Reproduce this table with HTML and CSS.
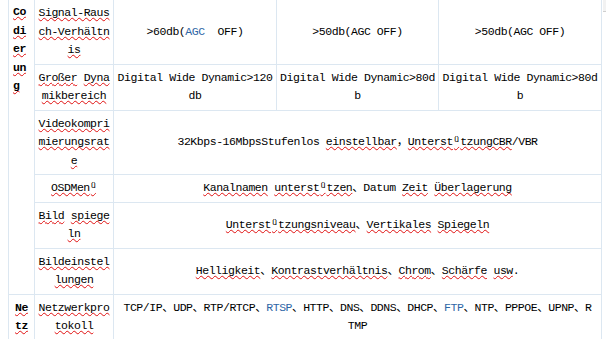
FILE: index.html
```html
<!DOCTYPE html>
<html lang="de">
<head>
<meta charset="utf-8">
<title>Spezifikation</title>
<link rel="stylesheet" href="styles.css">
</head>
<body>
<div class="scrollmark"></div>
<table class="spec">
  <colgroup>
    <col class="c1"><col class="c2"><col class="c3"><col class="c4"><col class="c5">
  </colgroup>
  <tr>
    <td class="group left" rowspan="6"><span class="sp">Codierung</span></td>
    <td class="name"><span class="sp">Signal-Rausch-Verhältnis</span></td>
    <td>&gt;60db(<span class="lnk">AGC</span>&nbsp; OFF)</td>
    <td>&gt;50db(AGC OFF)</td>
    <td>&gt;50db(AGC OFF)</td>
  </tr>
  <tr>
    <td class="name"><span class="sp">Großer</span> <span class="sp">Dynamikbereich</span></td>
    <td>Digital Wide Dynamic&gt;120db</td>
    <td>Digital Wide Dynamic&gt;80db</td>
    <td>Digital Wide Dynamic&gt;80db</td>
  </tr>
  <tr>
    <td class="name"><span class="sp">Videokomprimierungsrate</span></td>
    <td colspan="3">32Kbps-16MbpsStufenlos <span class="sp">einstellbar</span>，<span class="sp">Unterst<span class="uu">ü</span>tzungCBR</span>/VBR</td>
  </tr>
  <tr>
    <td class="name"><span class="sp">OSDMen<span class="uu">ü</span></span></td>
    <td colspan="3"><span class="sp">Kanalnamen</span> <span class="sp">unterst<span class="uu">ü</span>tzen</span>、Datum <span class="sp">Zeit</span> <span class="sp">Überlagerung</span></td>
  </tr>
  <tr>
    <td class="name"><span class="sp">Bild</span> <span class="sp">spiegeln</span></td>
    <td colspan="3"><span class="sp">Unterst<span class="uu">ü</span>tzungsniveau</span>、<span class="sp">Vertikales</span> <span class="sp">Spiegeln</span></td>
  </tr>
  <tr>
    <td class="name"><span class="sp">Bildeinstellungen</span></td>
    <td colspan="3"><span class="sp">Helligkeit</span>、<span class="sp">Kontrastverhältnis</span>、<span class="sp">Chrom</span>、<span class="sp">Schärfe</span> <span class="sp">usw</span>.</td>
  </tr>
  <tr>
    <td class="group"><span class="sp">Netz</span></td>
    <td class="name"><span class="sp">Netzwerkprotokoll</span></td>
    <td colspan="3">TCP/IP、UDP、RTP/RTCP、<span class="lnk">RTSP</span>、HTTP、DNS、DDNS、DHCP、<span class="lnk">FTP</span>、NTP、PPPOE、UPNP、R<br>TMP</td>
  </tr>
</table>
</body>
</html>
```

FILE: styles.css
```css
html, body {
  margin: 0;
  padding: 0;
  background: #ffffff;
}

body {
  padding-left: 8px;
  font-family: "Liberation Mono", "Noto Sans CJK SC", monospace;
  font-size: 11.5px;
  letter-spacing: -0.45px;
  line-height: 18.5px;
  color: #000000;
  overflow: hidden;
}

.spec {
  border-collapse: collapse;
  table-layout: fixed;
  width: 594px;
  margin-top: -1px;
}

.c1 { width: 26px; }
.c2 { width: 79px; }
.c3 { width: 163px; }
.c4 { width: 162px; }
.c5 { width: 163px; }

.spec td {
  border: 1px solid #dce7f1;
  padding: 4px 3px;
  text-align: center;
  vertical-align: middle;
  word-break: break-all;
}

.spec td.group {
  font-weight: bold;
}

.spec td.left {
  text-align: left;
  vertical-align: top;
  padding-left: 4px;
  padding-right: 2px;
  padding-top: 3px;
}

.sp {
  text-decoration-line: underline;
  text-decoration-style: wavy;
  text-decoration-color: #e01010;
  text-decoration-thickness: 1px;
  text-underline-offset: 1px;
  text-decoration-skip-ink: none;
}

.lnk {
  color: #2e66a6;
}

.uu {
  font-size: 8.5px;
  letter-spacing: 0;
  vertical-align: 3px;
  line-height: 1;
  padding: 0 1px;
}

.scrollmark {
  position: absolute;
  top: 0;
  right: 0;
  width: 3px;
  height: 11px;
  background: #f2f2f2;
  border-bottom: 1px solid #cfcfcf;
}
```
